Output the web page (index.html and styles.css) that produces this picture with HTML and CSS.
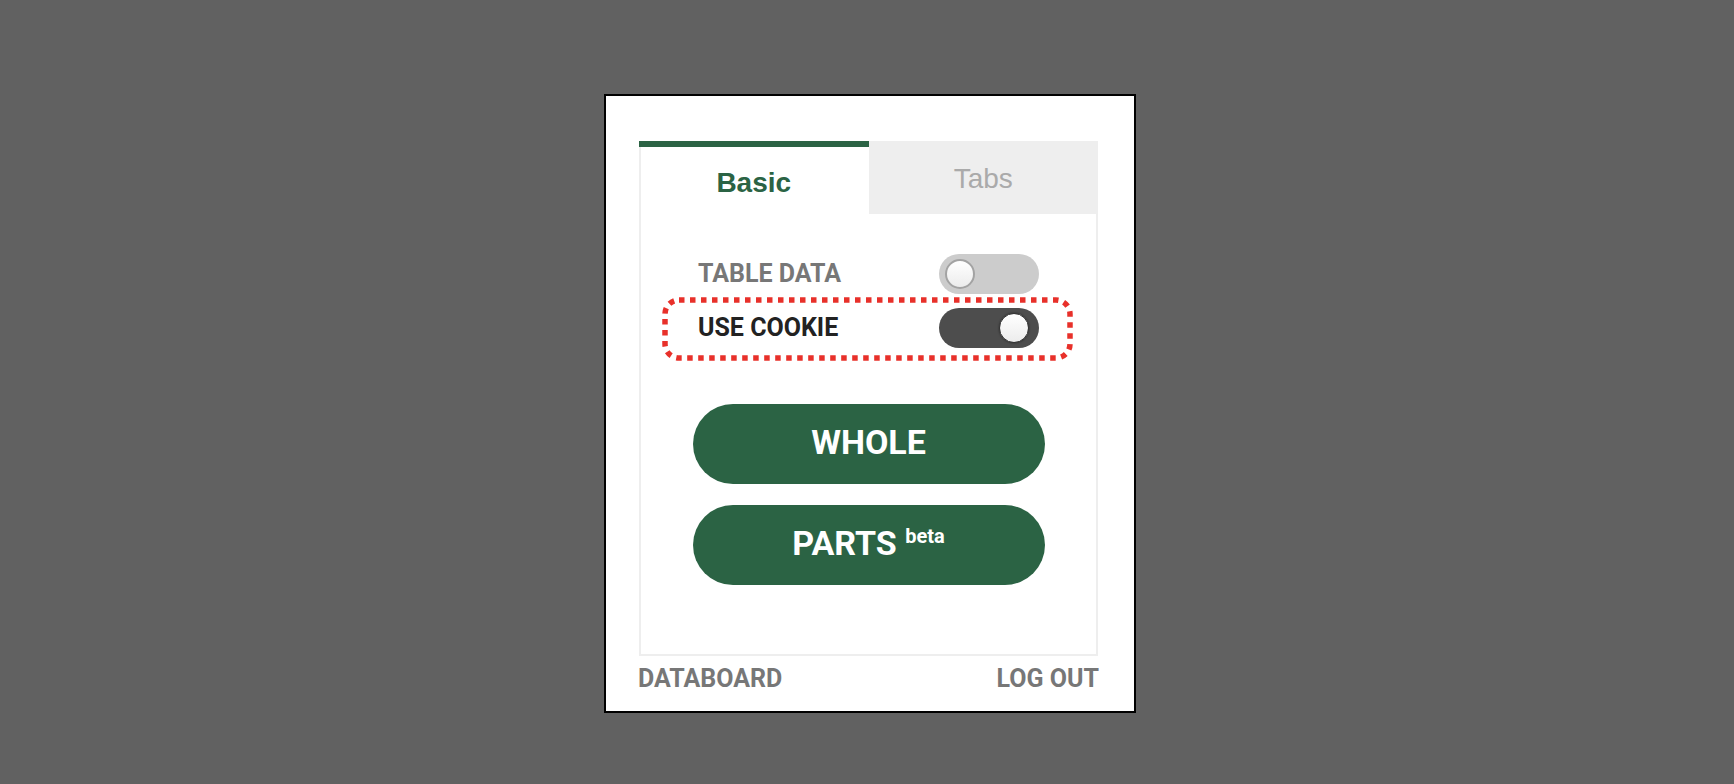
FILE: index.html
```html
<!DOCTYPE html>
<html lang="en">
<head>
<meta charset="utf-8">
<title>Panel</title>
<link rel="stylesheet" href="styles.css">
</head>
<body>
<div class="stage">
  <div class="panel">
    <div class="card">
      <div class="tabs">
        <div class="tab tab-active">Basic</div>
        <div class="tab tab-idle">Tabs</div>
      </div>
      <div class="options">
        <div class="row">
          <span class="label label-muted">TABLE DATA</span>
          <span class="switch switch-off"><span class="knob"></span></span>
        </div>
        <div class="row row-marked">
          <span class="label label-dark">USE COOKIE</span>
          <span class="switch switch-on"><span class="knob"></span></span>
          <svg class="mark" width="411" height="64" viewBox="0 0 411 64" aria-hidden="true">
            <rect x="3" y="3" width="405" height="58" rx="14" ry="14" fill="none" stroke="#e8302a" stroke-width="5.5" stroke-dasharray="5.5 5.5"/>
          </svg>
        </div>
      </div>
      <div class="actions">
        <button class="btn">WHOLE</button>
        <button class="btn">PARTS <sup class="beta">beta</sup></button>
      </div>
    </div>
    <div class="footer">
      <span class="link">DATABOARD</span>
      <span class="link">LOG OUT</span>
    </div>
  </div>
</div>
</body>
</html>
```

FILE: styles.css
```css
html, body {
  margin: 0;
  padding: 0;
}
body {
  background: #616161;
  width: 1734px;
  height: 784px;
  overflow: hidden;
  font-family: Roboto, "Liberation Sans", sans-serif;
}
.stage {
  padding: 94px 0 0 604px;
}
.panel {
  width: 532px;
  box-sizing: border-box;
  border: 2px solid #000;
  background: #fff;
  padding: 45px 36px 18px 33px;
}
.card {
  width: 459px;
  box-sizing: border-box;
  border: 2px solid #eeeeee;
  border-top: none;
  padding-bottom: 69px;
}
.tabs {
  display: flex;
  margin: 0 -2px;
}
.tab {
  flex: 1 1 0;
  height: 73px;
  box-sizing: border-box;
  text-align: center;
  font-family: "Liberation Sans", Arial, sans-serif;
  font-size: 28px;
  line-height: 32px;
}
.tab-active {
  border-top: 6px solid #2b6344;
  padding-top: 20px;
  color: #2b6344;
  font-weight: bold;
}
.tab-idle {
  background: #eeeeee;
  color: #aaaaaa;
  padding-top: 22px;
}
.options {
  display: flex;
  flex-direction: column;
  gap: 14px;
  padding: 40px 57px 0 57px;
}
.row {
  position: relative;
  display: flex;
  align-items: center;
  justify-content: space-between;
  height: 40px;
}
.label {
  font-size: 25px;
  font-weight: bold;
  line-height: 28px;
}
.label-muted {
  color: #777777;
}
.label-dark {
  color: #222222;
}
.switch {
  position: relative;
  width: 100px;
  height: 40px;
  border-radius: 20px;
  flex: none;
}
.switch-off {
  background: #cccccc;
}
.switch-on {
  background: #4d4d4d;
}
.knob {
  position: absolute;
  top: 5px;
  width: 30px;
  height: 30px;
  box-sizing: border-box;
  border-radius: 50%;
  background: linear-gradient(#ffffff, #ececec);
}
.switch-off .knob {
  left: 6px;
  border: 2px solid #a3a3a3;
}
.switch-on .knob {
  left: 60px;
  border: 1px solid #333333;
  box-shadow: 0 0 2px rgba(0, 0, 0, 0.5);
}
.mark {
  position: absolute;
  left: -36px;
  top: -11px;
}
.actions {
  display: flex;
  flex-direction: column;
  align-items: center;
  gap: 21px;
  padding-top: 56px;
}
.btn {
  width: 352px;
  height: 80px;
  border: none;
  border-radius: 40px;
  background: #2b6344;
  color: #ffffff;
  font-family: Roboto, "Liberation Sans", sans-serif;
  font-size: 34px;
  font-weight: bold;
  padding: 0 0 4px 0;
  cursor: pointer;
}
.beta {
  font-size: 20px;
  vertical-align: 0;
  position: relative;
  top: -12px;
}
.footer {
  display: flex;
  justify-content: space-between;
  width: 461px;
  margin-left: -1px;
  padding-top: 8px;
}
.link {
  font-size: 25px;
  font-weight: bold;
  color: #777777;
  line-height: 29px;
}
```
